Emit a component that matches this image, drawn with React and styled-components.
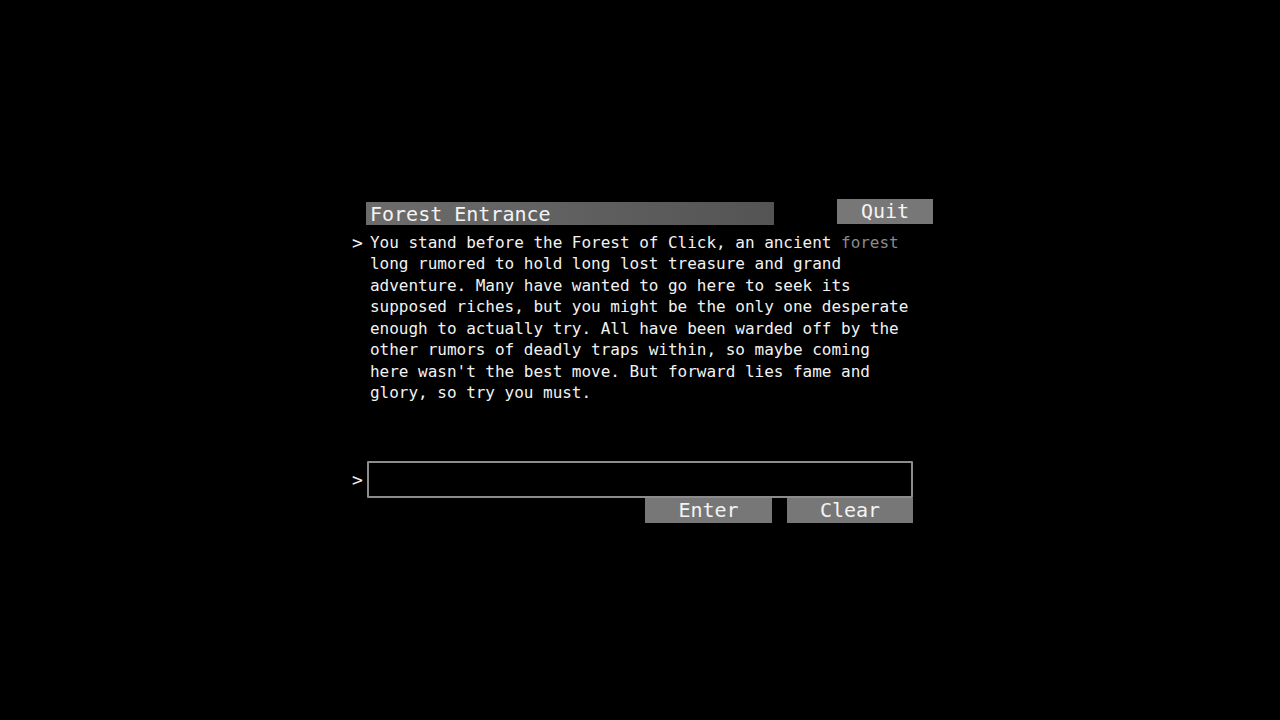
import React from "react";
import styled, { createGlobalStyle } from "styled-components";

const Global = createGlobalStyle`
  html, body { margin: 0; padding: 0; background: #000; }
  body { font-family: "DejaVu Sans Mono", "Liberation Mono", monospace; color: #f2f2f2; }
`;

const Screen = styled.div`
  width: 1280px;
  height: 720px;
  display: flex;
  justify-content: center;
  background: #000;
`;

const Panel = styled.div`
  width: 584px;
  margin-left: 4px;
  margin-top: 199px;
  display: flex;
  flex-direction: column;
`;

const Header = styled.div`
  display: flex;
  align-items: flex-start;
  padding-left: 16px;
`;

const TitleBar = styled.div`
  width: 408px;
  height: 23px;
  margin-top: 3px;
  background: linear-gradient(to right, #6c6c6c, #545454);
  color: #f4f4f4;
  font-size: 20px;
  line-height: 24px;
  padding-left: 4px;
  box-sizing: border-box;
  white-space: nowrap;
`;

const Button = styled.button`
  width: ${(p) => p.$w}px;
  height: 25px;
  margin-left: ${(p) => p.$ml || 0}px;
  border: none;
  padding: 0;
  background: #777;
  color: #f4f4f4;
  font-family: "DejaVu Sans Mono", "Liberation Mono", monospace;
  font-size: 20px;
  line-height: 25px;
  cursor: pointer;
`;

const Row = styled.div`
  display: flex;
  align-items: ${(p) => p.$align || "flex-start"};
  margin-top: ${(p) => p.$mt || 0}px;
`;

const Prompt = styled.span`
  width: 20px;
  flex: none;
  padding-left: 2px;
  box-sizing: border-box;
  font-size: 18px;
  line-height: 21.5px;
  padding-top: ${(p) => p.$pt || 0}px;
`;

const Story = styled.div`
  font-size: 16px;
  line-height: 21.45px;
  white-space: pre-line;
  letter-spacing: -0.02px;
`;

const Dim = styled.span`
  color: #8a8a8a;
`;

const InputBox = styled.input`
  width: 546px;
  height: 37px;
  margin-left: -3px;
  box-sizing: border-box;
  background: #000;
  border: 2px solid #8c8c8c;
  border-radius: 1px;
  outline: none;
  color: #f2f2f2;
  font-family: "DejaVu Sans Mono", "Liberation Mono", monospace;
  font-size: 16px;
  padding: 0 6px;
`;

const Actions = styled.div`
  display: flex;
  justify-content: flex-end;
  gap: 15px;
  width: 563px;
`;

export default function App() {
  return (
    <Screen>
      <Global />
      <Panel>
        <Header>
          <TitleBar>Forest Entrance</TitleBar>
          <Button $w={96} $ml={63}>Quit</Button>
        </Header>
        <Row $mt={7}>
          <Prompt>&gt;</Prompt>
          <Story>
            You stand before the Forest of Click, an ancient <Dim>forest</Dim>
            {"\n"}long rumored to hold long lost treasure and grand
            {"\n"}adventure. Many have wanted to go here to seek its
            {"\n"}supposed riches, but you might be the only one desperate
            {"\n"}enough to actually try. All have been warded off by the
            {"\n"}other rumors of deadly traps within, so maybe coming
            {"\n"}here wasn't the best move. But forward lies fame and
            {"\n"}glory, so try you must.
          </Story>
        </Row>
        <Row $mt={57} $align="center">
          <Prompt $pt={2}>&gt;</Prompt>
          <InputBox type="text" />
        </Row>
        <Row>
          <Actions>
            <Button $w={127}>Enter</Button>
            <Button $w={126}>Clear</Button>
          </Actions>
        </Row>
      </Panel>
    </Screen>
  );
}
